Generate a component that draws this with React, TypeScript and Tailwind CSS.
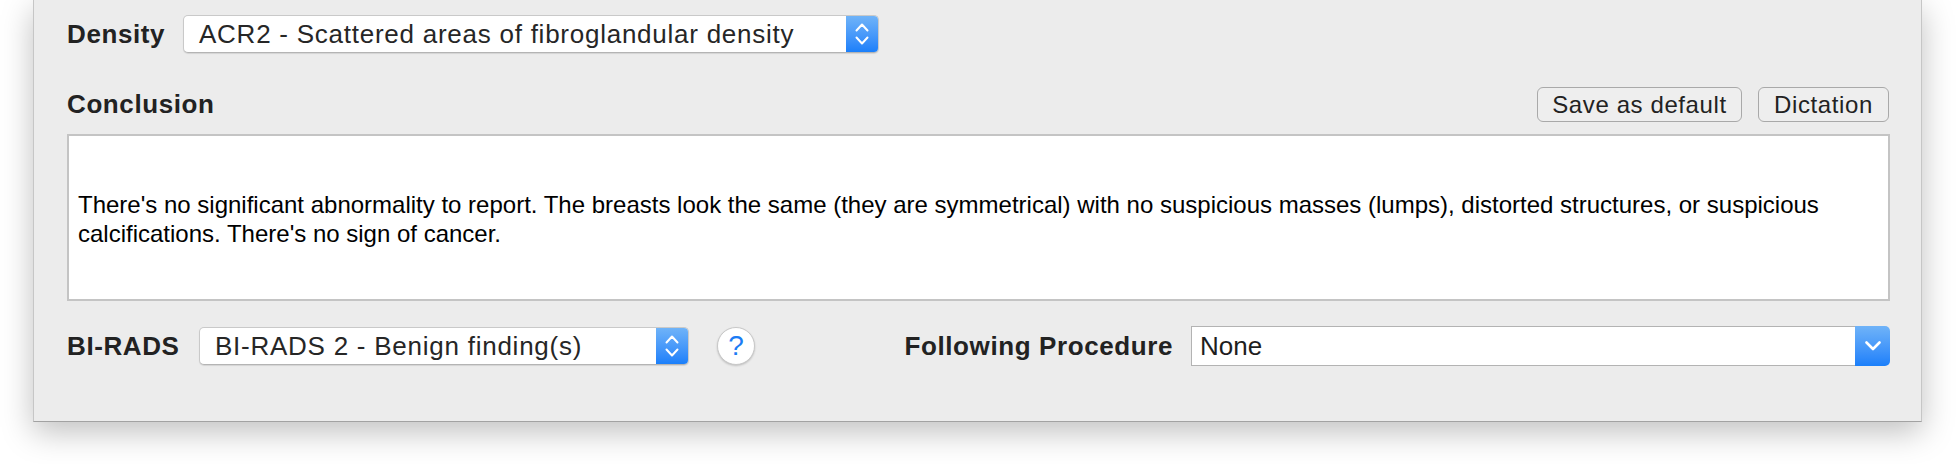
import { ReactNode } from "react";

const UpDown = () => (
  <svg width="14" height="22" viewBox="0 0 14 22" fill="none" stroke="white" strokeWidth="2" strokeLinecap="round" strokeLinejoin="round">
    <path d="M1.5 7.5 L7 1.5 L12.5 7.5" />
    <path d="M1.5 14.5 L7 20.5 L12.5 14.5" />
  </svg>
);

const Down = () => (
  <svg width="16" height="10" viewBox="0 0 16 10" fill="none" stroke="white" strokeWidth="2.6" strokeLinecap="round" strokeLinejoin="round">
    <path d="M1.5 1.5 L8 8 L14.5 1.5" />
  </svg>
);

const PopUp = ({ value, className }: { value: string; className: string }) => (
  <div className={`flex h-[38px] rounded-[5px] bg-white border border-[#c9c9c9] border-b-[#b4b4b4] shadow-[0_1px_1px_rgba(0,0,0,0.1)] overflow-hidden ${className}`}>
    <span className="flex-1 flex items-center pl-[15px] text-[26px] tracking-[0.75px] text-[#262626] whitespace-nowrap">
      {value}
    </span>
    <span className="w-[32px] flex items-center justify-center bg-linear-to-b from-[#6fb3f8] to-[#1a7ffa]">
      <UpDown />
    </span>
  </div>
);

const Label = ({ children, className = "" }: { children: ReactNode; className?: string }) => (
  <span className={`font-bold text-[26px] tracking-[0.6px] text-[#222] whitespace-nowrap ${className}`}>{children}</span>
);

const Button = ({ children, className }: { children: ReactNode; className: string }) => (
  <button className={`h-[35px] rounded-[6px] border-[1.5px] border-[#a9a9a9] bg-[#eeeeee] text-[24px] tracking-[0.6px] text-[#222] flex items-center justify-center ${className}`}>
    {children}
  </button>
);

export default function App() {
  return (
    <div className="h-[464px] bg-white font-['Liberation_Sans',Arial,sans-serif]">
      <div className="ml-[33px] w-[1889px] h-[422px] bg-[#ececec] border-x border-b border-x-[#c6c6c6] border-b-[#a2a2a2] shadow-[0_10px_30px_rgba(0,0,0,0.25)] pl-[33px] pr-[31px] pt-[15px] flex flex-col">
        <div className="flex items-center h-[38px]">
          <Label className="w-[116px]">Density</Label>
          <PopUp value="ACR2 - Scattered areas of fibroglandular density" className="w-[696px]" />
        </div>

        <div className="flex items-center h-[35px] mt-[34px]">
          <Label className="flex-1">Conclusion</Label>
          <Button className="w-[205px]">Save as default</Button>
          <Button className="w-[131px] ml-[16px] mr-[1px]">Dictation</Button>
        </div>

        <div className="mt-[12px] h-[167px] border-2 border-[#c4c4c4] bg-white flex flex-col justify-center pl-[9px] pt-[3px] text-[24px] leading-[29px] text-black">
          <p className="whitespace-nowrap">
            There's no significant abnormality to report. The breasts look the same (they are symmetrical) with no suspicious masses (lumps), distorted structures, or suspicious
          </p>
          <p className="whitespace-nowrap">calcifications. There's no sign of cancer.</p>
        </div>

        <div className="flex items-center h-[40px] mt-[25px]">
          <Label className="w-[132px]">BI-RADS</Label>
          <PopUp value="BI-RADS 2 - Benign finding(s)" className="w-[490px]" />
          <div className="ml-[28px] w-[38px] h-[38px] rounded-full bg-white border border-[#c8c8c8] shadow-[0_1px_2px_rgba(0,0,0,0.18)] flex items-center justify-center text-[28px] text-[#1c7cf4]">
            ?
          </div>
          <Label className="ml-auto mr-[18px]">Following Procedure</Label>
          <div className="flex h-[40px] w-[699px]">
            <span className="flex-1 flex items-center bg-white border border-r-0 border-[#b3b3b3] pl-[8px] text-[26px] text-[#1e1e1e]">
              None
            </span>
            <span className="w-[35px] rounded-r-[5px] flex items-center justify-center bg-linear-to-b from-[#6fb3f8] to-[#1a7ffa]">
              <Down />
            </span>
          </div>
        </div>
      </div>
    </div>
  );
}
